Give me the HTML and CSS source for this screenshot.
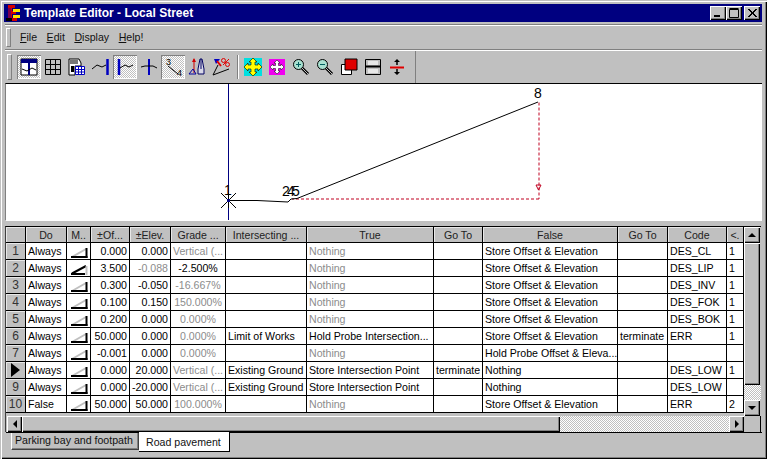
FILE: index.html
```html
<!DOCTYPE html>
<html lang="en">
<head>
<meta charset="utf-8">
<title>Template Editor - Local Street</title>
<link rel="stylesheet" href="styles.css">
</head>
<body>
<svg class="defs" width="0" height="0" aria-hidden="true">
  <symbol id="wedge" viewBox="0 0 17 12">
    <path d="M1 11L15 3" stroke="#c0c0c0" stroke-width="2" fill="none"/>
    <path d="M0 11H16.500" stroke="#000" stroke-width="2" fill="none"/>
    <path d="M15.500 2V12" stroke="#000" stroke-width="2" fill="none"/>
  </symbol>
  <symbol id="wedge-dark" viewBox="0 0 17 12">
    <path d="M1 10.500L15 3" stroke="#000" stroke-width="2" fill="none"/>
    <path d="M0 11H14" stroke="#000" stroke-width="2" fill="none"/>
    <path d="M15.500 3V12" stroke="#c0c0c0" stroke-width="2" fill="none"/>
  </symbol>
</svg>
<div class="window">
  <header class="titlebar">
    <svg class="app-icon" width="16" height="18" viewBox="0 0 16 18"><path d="M3 1H10V4H7V7H11V10H7V14H12V17H3Z" fill="#d40000"/><path d="M3 4H6V14H3Z" fill="#7a0050"/><path d="M8 5H15V8H8ZM8 11H15V14H8Z" fill="#ffe800"/><path d="M1 14H7V17H1Z" fill="#000"/></svg>
    <span class="title-text">Template Editor - Local Street</span>
    <div class="win-buttons">
      <span class="win-btn"><svg width="14" height="12" viewBox="0 0 14 12"><path d="M3 8H9V10H3Z" fill="#000"/></svg></span>
      <span class="win-btn"><svg width="14" height="12" viewBox="0 0 14 12"><path d="M2.500 2.500H11.500V10.500H2.500ZM2.500 1.500H11.500" fill="none" stroke="#000"/></svg></span>
      <span class="win-btn win-close"><svg width="14" height="12" viewBox="0 0 14 12"><path d="M3 2L11 10M4 2L12 10M11 2L3 10M12 2L4 10" fill="none" stroke="#000"/></svg></span>
    </div>
  </header>

  <nav class="menubar">
    <span class="gripper gripper-menu"></span>
    <span class="menu-item"><u>F</u>ile</span>
    <span class="menu-item"><u>E</u>dit</span>
    <span class="menu-item"><u>D</u>isplay</span>
    <span class="menu-item"><u>H</u>elp!</span>
  </nav>

  <div class="toolstrip">
    <div class="toolbar">
      <span class="gripper gripper-tool"></span>
      <span class="tool tool-on"><svg width="18" height="18" viewBox="0 0 18 18"><path d="M1 1H17V17H1Z" fill="#fff" stroke="#000"/><path d="M1 1H17V5H1Z" fill="#000080"/><path d="M9 5V17" stroke="#000080" stroke-width="2"/><path d="M2 11L7 13L12 10L16 12" stroke="#000" fill="none"/></svg></span>
      <span class="tool"><svg width="18" height="18" viewBox="0 0 18 18"><path d="M1.500 1.500H16.500V16.500H1.500ZM6.500 1.500V16.500M11.500 1.500V16.500M1.500 6.500H16.500M1.500 11.500H16.500" fill="none" stroke="#000" stroke-width="1"/></svg></span>
      <span class="tool"><svg width="18" height="18" viewBox="0 0 18 18"><path d="M1 1H11L13 5V8H7V17H1Z" fill="#fff" stroke="#000"/><path d="M2 2H10V6H2Z" fill="#777"/><path d="M3 8H6V14H3Z" fill="#000"/><path d="M7.500 8.500H16.500V16.500H7.500ZM10.500 8.500V16.500M13.500 8.500V16.500M7.500 11.500H16.500M7.500 14H16.500" fill="#fff" stroke="#0000c0"/></svg></span>
      <span class="tool"><svg width="18" height="18" viewBox="0 0 18 18"><path d="M0 11L5 7L10 9L14 7" fill="none" stroke="#000"/><path d="M15.500 1V17" stroke="#0000c0" stroke-width="2.500"/></svg></span>
      <span class="tool tool-on"><svg width="18" height="18" viewBox="0 0 18 18"><path d="M3 1V17" stroke="#0000c0" stroke-width="2.500"/><path d="M4 10L9 7L13 9L17 7" fill="none" stroke="#000"/></svg></span>
      <span class="tool"><svg width="18" height="18" viewBox="0 0 18 18"><path d="M9 1V17" stroke="#0000c0" stroke-width="2"/><path d="M1 9L5 8L13 8L17 10" fill="none" stroke="#000"/></svg></span>
      <span class="tool tool-on"><svg width="20" height="20" viewBox="0 0 20 20"><text class="tool-num" x="3" y="8">3</text><path d="M5 9L15 17" stroke="#000"/><text class="tool-num" x="14" y="19">4</text></svg></span>
      <span class="tool"><svg width="18" height="20" viewBox="0 0 18 20"><path d="M6 2V16" stroke="#d00000" stroke-width="1"/><path d="M4 5L6 1L8 5Z" fill="#d00000"/><path d="M1 17L5 12L8 17Z" fill="none" stroke="#0000a0"/><path d="M12 2H14L16 12V17H10V12Z" fill="#d8d8e8" stroke="#000060"/><path d="M13 2V12" stroke="#000060"/></svg></span>
      <span class="tool"><svg width="18" height="20" viewBox="0 0 18 20"><path d="M1 18L6 8M1 18L17 12" fill="none" stroke="#000"/><path d="M2 2L8 2L4 7Z" fill="#0000c0"/><path d="M5 4L9 9" stroke="#e00000" stroke-width="2"/><path d="M11 8L17 2" stroke="#e00000"/><circle cx="11.500" cy="3.500" r="2" fill="none" stroke="#e00000"/><circle cx="15.500" cy="7.500" r="2" fill="none" stroke="#e00000"/></svg></span>
      <span class="tool-sep"></span>
      <span class="tool"><svg width="18" height="18" viewBox="0 0 18 18"><path d="M0 0H18V18H0Z" fill="#00e0e0"/><path d="M9 0L13 4H11V7H14V5L18 9L14 13V11H11V14H13L9 18L5 14H7V11H4V13L0 9L4 5V7H7V4H5Z" fill="#ffff00" stroke="#000" stroke-width=".6"/></svg></span>
      <span class="tool"><svg width="16" height="16" viewBox="0 0 16 16"><path d="M0 0H16V16H0Z" fill="#f000f0"/><path d="M8 1L11 4H9.500V6.500H12V5L15 8L12 11V9.500H9.500V12H11L8 15L5 12H6.500V9.500H4V11L1 8L4 5V6.500H6.500V4H5Z" fill="#fff" stroke="#000" stroke-width=".5"/></svg></span>
      <span class="tool"><svg width="18" height="18" viewBox="0 0 18 18"><path d="M10 10L16 16" stroke="#000" stroke-width="3"/><path d="M10 10L16 16" stroke="#c0c0c0"/><circle cx="6.500" cy="6.500" r="5" fill="#a8e0d0" stroke="#000"/><path d="M4 6.500H9M6.500 4V9" stroke="#006060"/></svg></span>
      <span class="tool"><svg width="18" height="18" viewBox="0 0 18 18"><path d="M10 10L16 16" stroke="#000" stroke-width="3"/><path d="M10 10L16 16" stroke="#c0c0c0"/><circle cx="6.500" cy="6.500" r="5" fill="#a8e0d0" stroke="#000"/><path d="M4 6.500H9" stroke="#006060"/></svg></span>
      <span class="tool"><svg width="18" height="18" viewBox="0 0 18 18"><path d="M1.500 6.500H11.500V16.500H1.500Z" fill="#fff" stroke="#000"/><path d="M5 1H17V12H5Z" fill="#e00000" stroke="#000"/></svg></span>
      <span class="tool"><svg width="18" height="18" viewBox="0 0 18 18"><path d="M1.500 1.500H16.500V16.500H1.500Z" fill="#c0c0c0" stroke="#000"/><path d="M1 8.500H17" stroke="#000" stroke-width="2"/><path d="M4 3H14V7H4ZM4 11H14V15H4Z" fill="#e8e8e8"/></svg></span>
      <span class="tool"><svg width="18" height="18" viewBox="0 0 18 18"><path d="M2 9.500H16" stroke="#e00000" stroke-width="2"/><path d="M9 2V7M9 11V16" stroke="#000" stroke-width="1.500"/><path d="M6 4L9 1L12 4ZM6 14L9 17L12 14Z" fill="#000"/></svg></span>
    </div>
  </div>

  <section class="canvas">
    <svg class="drawing" width="755" height="136" viewBox="6 84 755 136">
      <path d="M228.500 84V220" stroke="#000080" fill="none"/>
      <path d="M539 102.500V199M539 199H292" stroke="#c00020" stroke-dasharray="3 2" fill="none"/>
      <path d="M536 185H541L538.500 190Z" fill="none" stroke="#c00020"/>
      <path d="M228 200.500L257 200.500L288 202L291 199L297 198.500L538 102" stroke="#000" fill="none"/>
      <path d="M221 193L236 208M236 193L221 208M228.500 193V208" stroke="#000" fill="none"/>
      <path d="M227 199H230V202H227Z" fill="#000080"/>
      <text class="node" x="228" y="195">1</text>
      <text class="node node-tight" x="282" y="196">245</text>
      <text class="node" x="538" y="98">8</text>
    </svg>
  </section>

  <section class="gridbox">
    <div class="grid-main">
      <table class="grid">
        <colgroup>
          <col class="c-head"><col class="c-do"><col class="c-m"><col class="c-of"><col class="c-el"><col class="c-gr"><col class="c-int"><col class="c-true"><col class="c-go1"><col class="c-false"><col class="c-go2"><col class="c-code"><col class="c-lt">
        </colgroup>
        <thead>
          <tr><th></th><th>Do</th><th>M..</th><th>±Of...</th><th>±Elev.</th><th>Grade ...</th><th>Intersecting ...</th><th>True</th><th>Go To</th><th>False</th><th>Go To</th><th>Code</th><th>&lt;.</th></tr>
        </thead>
        <tbody>
          <tr><th>1</th><td>Always</td><td class="ic"><svg width="17" height="12"><use href="#wedge"/></svg></td><td class="n">0.000</td><td class="n">0.000</td><td class="dim">Vertical (...</td><td></td><td class="dim">Nothing</td><td></td><td>Store Offset &amp; Elevation</td><td></td><td>DES_CL</td><td>1</td></tr>
          <tr><th>2</th><td>Always</td><td class="ic"><svg width="17" height="12"><use href="#wedge-dark"/></svg></td><td class="n">3.500</td><td class="n dim">-0.088</td><td class="c">-2.500%</td><td></td><td class="dim">Nothing</td><td></td><td>Store Offset &amp; Elevation</td><td></td><td>DES_LIP</td><td>1</td></tr>
          <tr><th>3</th><td>Always</td><td class="ic"><svg width="17" height="12"><use href="#wedge"/></svg></td><td class="n">0.300</td><td class="n">-0.050</td><td class="c dim">-16.667%</td><td></td><td class="dim">Nothing</td><td></td><td>Store Offset &amp; Elevation</td><td></td><td>DES_INV</td><td>1</td></tr>
          <tr><th>4</th><td>Always</td><td class="ic"><svg width="17" height="12"><use href="#wedge"/></svg></td><td class="n">0.100</td><td class="n">0.150</td><td class="c dim">150.000%</td><td></td><td class="dim">Nothing</td><td></td><td>Store Offset &amp; Elevation</td><td></td><td>DES_FOK</td><td>1</td></tr>
          <tr><th>5</th><td>Always</td><td class="ic"><svg width="17" height="12"><use href="#wedge"/></svg></td><td class="n">0.200</td><td class="n">0.000</td><td class="c dim">0.000%</td><td></td><td class="dim">Nothing</td><td></td><td>Store Offset &amp; Elevation</td><td></td><td>DES_BOK</td><td>1</td></tr>
          <tr><th>6</th><td>Always</td><td class="ic"><svg width="17" height="12"><use href="#wedge"/></svg></td><td class="n">50.000</td><td class="n">0.000</td><td class="c dim">0.000%</td><td>Limit of Works</td><td>Hold Probe Intersection...</td><td></td><td>Store Offset &amp; Elevation</td><td>terminate</td><td>ERR</td><td>1</td></tr>
          <tr><th>7</th><td>Always</td><td class="ic"><svg width="17" height="12"><use href="#wedge"/></svg></td><td class="n">-0.001</td><td class="n">0.000</td><td class="c dim">0.000%</td><td></td><td class="dim">Nothing</td><td></td><td>Hold Probe Offset &amp; Eleva...</td><td></td><td></td><td></td></tr>
          <tr><th><span class="row-arrow"></span></th><td>Always</td><td class="ic"><svg width="17" height="12"><use href="#wedge"/></svg></td><td class="n">0.000</td><td class="n">20.000</td><td class="dim">Vertical (...</td><td>Existing Ground</td><td>Store Intersection Point</td><td>terminate</td><td>Nothing</td><td></td><td>DES_LOW</td><td>1</td></tr>
          <tr><th>9</th><td>Always</td><td class="ic"><svg width="17" height="12"><use href="#wedge"/></svg></td><td class="n">0.000</td><td class="n">-20.000</td><td class="dim">Vertical (...</td><td>Existing Ground</td><td>Store Intersection Point</td><td></td><td>Nothing</td><td></td><td>DES_LOW</td><td></td></tr>
          <tr><th>10</th><td>False</td><td class="ic"><svg width="17" height="12"><use href="#wedge"/></svg></td><td class="n">50.000</td><td class="n">50.000</td><td class="c dim">100.000%</td><td></td><td class="dim">Nothing</td><td></td><td>Store Offset &amp; Elevation</td><td></td><td>ERR</td><td>2</td></tr>
        </tbody>
      </table>
      <div class="vscroll">
        <span class="sb-btn"><span class="arr arr-up"></span></span>
        <span class="sb-thumb sb-thumb-v"></span>
        <span class="sb-track"></span>
        <span class="sb-btn"><span class="arr arr-down"></span></span>
      </div>
    </div>
    <div class="hscroll">
      <span class="sb-btn"><span class="arr arr-left"></span></span>
      <span class="sb-thumb sb-thumb-h"></span>
      <span class="sb-track"></span>
      <span class="sb-btn"><span class="arr arr-right"></span></span>
      <span class="sb-corner"></span>
    </div>
  </section>

  <div class="tabs">
    <span class="tab">Parking bay and footpath</span>
    <span class="tab tab-active">Road pavement</span>
  </div>
</div>
</body>
</html>
```

FILE: styles.css
```css
* { box-sizing: border-box; }
html, body { margin: 0; padding: 0; background: #c0c0c0; overflow: hidden; }
.defs { position: absolute; }
.window {
  width: 767px; height: 459px;
  background: #c0c0c0;
  font: 10.6px "Liberation Sans", Arial, sans-serif;
  color: #000;
  padding: 4px 5px 0 5px;
  display: flex; flex-direction: column;
  box-shadow: inset 1px 1px 0 #c0c0c0, inset 2px 2px 0 #fff, inset -1px -1px 0 #000, inset -2px -2px 0 #808080;
}
.titlebar {
  height: 18px; flex: none;
  margin: 0 0 0 -1px;
  padding: 0 2px 0 1px;
  width: 758px;
  background: #000080; color: #fff;
  display: flex; align-items: center; gap: 3px;
}
.app-icon { margin-left: 0; margin-right: 0; }
.title-text { font-weight: 700; font-size: 12px; flex: 1; }
.win-buttons { display: flex; }
.win-btn {
  width: 16px; height: 14px; background: #c0c0c0; display: flex; align-items: center; justify-content: center;
  box-shadow: inset 1px 1px 0 #fff, inset -1px -1px 0 #000, inset -2px -2px 0 #808080;
}
.win-close { margin-left: 2px; }
.menubar {
  height: 26px; flex: none;
  display: flex; align-items: center; gap: 9.500px;
  border-top: 1px solid #808080;
  box-shadow: inset 0 1px 0 #fff;
  margin-top: 2px;
  padding: 0 0 0 1px;
  border-bottom: 1px solid #808080;
}
.gripper { display: block; flex: none; width: 5px; border-left: 1px solid #fff; border-top: 1px solid #fff; border-right: 1px solid #808080; border-bottom: 1px solid #808080; }
.gripper-menu { height: 19px; margin-right: -0.500px; }
.gripper-tool { height: 26px; margin-right: 5px; margin-left: 2px; }
.menu-item { color: #111; }
.toolstrip { height: 33px; flex: none; box-shadow: inset 0 1px 0 #fff; }
.toolbar {
  width: 411px; height: 33px;
  display: flex; align-items: center;
  box-shadow: inset 0 1px 0 #fff, inset -1px 0 0 #808080;
}
.tool { width: 24px; height: 24px; display: flex; align-items: center; justify-content: center; flex: none; }
.tool-on {
  background: repeating-conic-gradient(#fff 0 25%, #c0c0c0 0 50%) 0 0 / 2px 2px;
  box-shadow: inset 1px 1px 0 #808080, inset -1px -1px 0 #fff;
}
.tool-num { font: 9px "Liberation Sans", sans-serif; fill: #000; }
.tool-sep { width: 2px; height: 24px; margin: 0 2px 0 4px; border-left: 1px solid #808080; border-right: 1px solid #fff; flex: none; }
.canvas {
  height: 138px; flex: none;
  width: 757px;
  border-top: 1px solid #000;
  border-left: 1px solid #808080;
  border-bottom: 1px solid #fff;
  background: #fff;
}
.drawing { display: block; }
.node { font: 14px "Liberation Sans", sans-serif; text-anchor: middle; fill: #000; }
.node-tight { text-anchor: start; letter-spacing: -2.800px; }
.gridbox {
  margin-top: 5px; flex: none;
  width: 756px; height: 206px;
  border-top: 1px solid #000;
  border-left: 1px solid #404040;
  display: flex; flex-direction: column;
}
.grid-main { display: flex; height: 189px; flex: none; }
.grid { border-collapse: separate; border-spacing: 0; table-layout: fixed; width: 738px; height: 186px; align-self: flex-start; }
.c-head { width: 20px; } .c-do { width: 41px; } .c-m { width: 24px; } .c-of { width: 39px; } .c-el { width: 41px; }
.c-gr { width: 55px; } .c-int { width: 81px; } .c-true { width: 127px; } .c-go1 { width: 49px; } .c-false { width: 135px; }
.c-go2 { width: 50px; } .c-code { width: 59px; } .c-lt { width: 17px; }
.grid thead tr { height: 16px; }
.grid tbody tr { height: 17px; }
.grid th, .grid td { padding: 0 2px; white-space: nowrap; overflow: hidden; border-right: 1px solid #000; border-bottom: 1px solid #000; font-weight: 400; line-height: 14px; }
.grid th { background: #c0c0c0; color: #222; text-align: center; box-shadow: inset 1px 1px 0 #e8e8e8; }
.grid tbody th { font-size: 12px; color: #333; }
.grid td { background: #fff; }
.grid .n { text-align: right; padding-right: 2px; padding-left: 0; }
.grid .c { text-align: center; }
.grid .dim { color: #8c8c8c; }
.grid .ic { padding: 1px 0 0 4px; line-height: 0; }
.ic svg { display: block; }
.row-arrow { display: inline-block; width: 0; height: 0; border-top: 7px solid transparent; border-bottom: 7px solid transparent; border-left: 9px solid #000; vertical-align: middle; }
.vscroll { width: 17px; height: 189px; display: flex; flex-direction: column; flex: none; }
.sb-btn { width: 16px; height: 16px; flex: none; background: #c0c0c0; display: flex; align-items: center; justify-content: center; box-shadow: inset 1px 1px 0 #fff, inset -1px -1px 0 #000, inset -2px -2px 0 #808080; }
.sb-thumb { background: #c0c0c0; flex: none; box-shadow: inset 1px 1px 0 #fff, inset -1px -1px 0 #000, inset -2px -2px 0 #808080; }
.sb-thumb-v { width: 16px; height: 142px; }
.sb-thumb-h { width: 538px; height: 16px; }
.sb-track { flex: 1; background: repeating-conic-gradient(#fff 0 25%, #c0c0c0 0 50%) 0 0 / 2px 2px; }
.hscroll { display: flex; height: 16px; width: 754px; margin-left: 1px; }
.hscroll .sb-btn { width: 15px; }
.sb-corner { width: 17px; background: #c0c0c0; flex: none; box-shadow: inset -1px 0 0 #000; }
.arr { display: block; width: 0; height: 0; }
.arr-up { border-left: 4px solid transparent; border-right: 4px solid transparent; border-bottom: 4px solid #000; }
.arr-down { border-left: 4px solid transparent; border-right: 4px solid transparent; border-top: 4px solid #000; }
.arr-left { border-top: 4px solid transparent; border-bottom: 4px solid transparent; border-right: 4px solid #000; }
.arr-right { border-top: 4px solid transparent; border-bottom: 4px solid transparent; border-left: 4px solid #000; }
.tabs { display: flex; align-items: flex-start; width: 756px; height: 20px; border-top: 1px solid #000; padding-left: 5px; margin-left: 1px; flex: none; }
.tab { height: 17px; padding: 0 0 0 3px; width: 128px; line-height: 15px; white-space: nowrap; overflow: hidden; background: #c0c0c0; border-left: 1px solid #fff; border-right: 1px solid #404040; border-bottom: 1px solid #404040; box-shadow: inset -1px -1px 0 #808080; color: #111; }
.tab-active { width: 91px; height: 20px; margin-top: -1px; background: #fff; border: 0; border-right: 1px solid #000; border-bottom: 1px solid #000; padding: 3px 0 0 7px; box-shadow: none; }
```
